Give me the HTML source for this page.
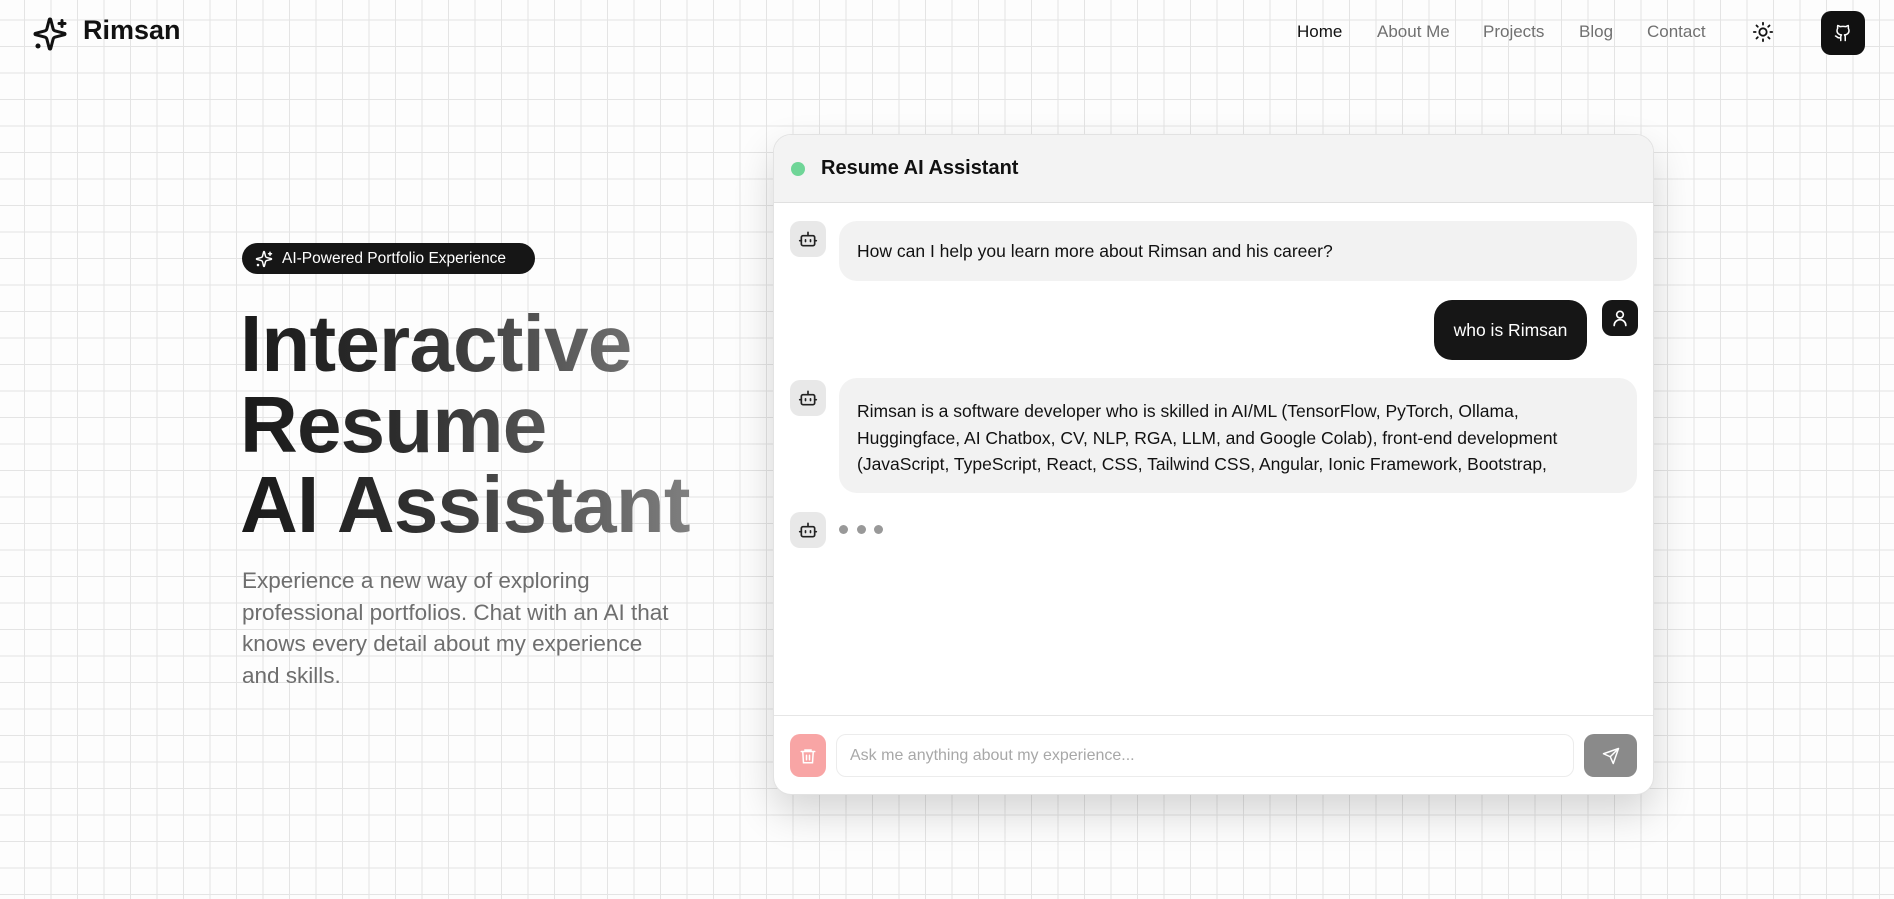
<!DOCTYPE html>
<html><head><meta charset="utf-8"><style>
*{box-sizing:border-box;margin:0;padding:0}
html,body{width:1894px;height:899px;overflow:hidden}
body{font-family:"Liberation Sans",sans-serif;background-color:#fdfdfd;
background-image:linear-gradient(to right,#e4e4e4 1px,transparent 1px),linear-gradient(to bottom,#e4e4e4 1px,transparent 1px);
background-size:26.5px 26.5px;background-position:24px 19.5px;position:relative;color:#111}
.abs{position:absolute}
.nav a{position:absolute;top:22px;font-size:17px;color:#707070;text-decoration:none}
h1{position:absolute;left:240px;top:304px;font-size:80px;line-height:80.5px;font-weight:bold;letter-spacing:-0.8px;
background:linear-gradient(90deg,#1a1a1a 0%,#2e2e2e 35%,#888 100%);-webkit-background-clip:text;background-clip:text;color:transparent;width:480px}
.card{position:absolute;left:773px;top:134px;width:881px;height:661px;background:#fff;border-radius:18px;border:1px solid #e2e2e2;box-shadow:0 18px 40px rgba(0,0,0,.16);overflow:hidden}
.hdr{height:68px;background:#f3f3f3;border-bottom:1px solid #e0e0e0;position:relative}
.av{position:absolute;width:36px;height:36px;border-radius:10px;background:#e8e8e8;display:flex;align-items:center;justify-content:center}
.bub{position:absolute;background:#f2f2f2;border-radius:18px;font-size:17.5px;color:#111}
</style></head><body>
<svg class="abs" style="left:32px;top:16px" width="36" height="36" viewBox="0 0 24 24" fill="none" stroke="#111" stroke-width="2" stroke-linecap="round" stroke-linejoin="round"><path d="M9.937 15.5A2 2 0 0 0 8.5 14.063l-6.135-1.582a.5.5 0 0 1 0-.962L8.5 9.936A2 2 0 0 0 9.937 8.5l1.582-6.135a.5.5 0 0 1 .963 0L14.063 8.5A2 2 0 0 0 15.5 9.937l6.135 1.581a.5.5 0 0 1 0 .964L15.5 14.063a2 2 0 0 0-1.437 1.437l-1.582 6.135a.5.5 0 0 1-.963 0z"/><path d="M20 3v4M22 5h-4"/><circle cx="4" cy="20" r="0.7" fill="#111"/></svg>
<div class="abs" style="left:83px;top:15px;font-size:27px;font-weight:bold;color:#111">Rimsan</div>
<div class="nav"><a style="left:1297px;color:#111">Home</a><a style="left:1377px">About Me</a><a style="left:1483px">Projects</a><a style="left:1579px">Blog</a><a style="left:1647px">Contact</a></div>
<svg class="abs" style="left:1752px;top:21px" width="22" height="22" viewBox="0 0 24 24" fill="none" stroke="#111" stroke-width="2" stroke-linecap="round"><circle cx="12" cy="12" r="4"/><path d="M12 2v2M12 20v2M2 12h2M20 12h2M4.9 4.9l1.4 1.4M17.7 17.7l1.4 1.4M4.9 19.1l1.4-1.4M17.7 6.3l1.4-1.4"/></svg>
<div class="abs" style="left:1821px;top:11px;width:44px;height:44px;background:#111;border-radius:10px;display:flex;align-items:center;justify-content:center">
<svg width="18" height="18" viewBox="0 0 24 24" fill="none" stroke="#fff" stroke-width="2" stroke-linecap="round" stroke-linejoin="round"><path d="M15 22v-4a4.8 4.8 0 0 0-1-3.5c3 0 6-2 6-5.5.08-1.25-.27-2.48-1-3.5.28-1.15.28-2.35 0-3.5 0 0-1 0-3 1.5-2.64-.5-5.36-.5-8 0C6 2 5 2 5 2c-.3 1.15-.3 2.35 0 3.5A5.4 5.4 0 0 0 4 9c0 3.5 3 5.5 6 5.5-.39.49-.68 1.05-.85 1.65S8.93 17.38 9 18v4"/><path d="M9 18c-4.51 2-5-2-7-2"/></svg></div>

<div class="abs" style="left:242px;top:243px;width:293px;height:31px;background:#161616;border-radius:16px;color:#fff;font-size:15.5px;line-height:31px;padding-left:40px">AI-Powered Portfolio Experience</div>
<svg class="abs" style="left:255px;top:250px" width="18" height="18" viewBox="0 0 24 24" fill="none" stroke="#fff" stroke-width="2" stroke-linecap="round" stroke-linejoin="round"><path d="M9.937 15.5A2 2 0 0 0 8.5 14.063l-6.135-1.582a.5.5 0 0 1 0-.962L8.5 9.936A2 2 0 0 0 9.937 8.5l1.582-6.135a.5.5 0 0 1 .963 0L14.063 8.5A2 2 0 0 0 15.5 9.937l6.135 1.581a.5.5 0 0 1 0 .964L15.5 14.063a2 2 0 0 0-1.437 1.437l-1.582 6.135a.5.5 0 0 1-.963 0z"/><path d="M20 3v4M22 5h-4"/><circle cx="4" cy="20" r="0.7" fill="#fff"/></svg>
<h1>Interactive<br>Resume<br>AI Assistant</h1>
<div class="abs" style="left:242px;top:565px;width:440px;font-size:22.5px;line-height:31.5px;color:#6e6e6e">Experience a new way of exploring professional portfolios. Chat with an AI that knows every detail about my experience and skills.</div>

<div class="card">
<div class="hdr"><div class="abs" style="left:17px;top:27px;width:14px;height:14px;border-radius:50%;background:#6fd597"></div>
<div class="abs" style="left:47px;top:22px;font-size:20px;font-weight:bold">Resume AI Assistant</div></div>
</div>
<div class="av" style="left:790px;top:221px"><svg width="20" height="20" viewBox="0 0 24 24" fill="none" stroke="#222" stroke-width="2" stroke-linecap="round"><rect x="4" y="8" width="16" height="12" rx="2"/><path d="M12 8V4M2 14h2M20 14h2M9 13v2M15 13v2"/></svg></div>
<div class="bub" style="left:839px;top:221px;width:798px;height:60px;padding:20px 18px">How can I help you learn more about Rimsan and his career?</div>
<div class="abs" style="left:1434px;top:300px;width:153px;height:60px;background:#161616;border-radius:18px;color:#fff;font-size:17.5px;line-height:60px;text-align:center">who is Rimsan</div>
<div class="av" style="left:1602px;top:300px;background:#161616"><svg width="20" height="20" viewBox="0 0 24 24" fill="none" stroke="#fff" stroke-width="2" stroke-linecap="round"><circle cx="12" cy="8" r="4"/><path d="M5 21a7 7 0 0 1 14 0"/></svg></div>
<div class="av" style="left:790px;top:380px"><svg width="20" height="20" viewBox="0 0 24 24" fill="none" stroke="#222" stroke-width="2" stroke-linecap="round"><rect x="4" y="8" width="16" height="12" rx="2"/><path d="M12 8V4M2 14h2M20 14h2M9 13v2M15 13v2"/></svg></div>
<div class="bub" style="left:839px;top:378px;width:798px;height:115px;padding:20px 18px;line-height:26.5px;overflow:hidden">Rimsan is a software developer who is skilled in AI/ML (TensorFlow, PyTorch, Ollama, Huggingface, AI Chatbox, CV, NLP, RGA, LLM, and Google Colab), front-end development (JavaScript, TypeScript, React, CSS, Tailwind CSS, Angular, Ionic Framework, Bootstrap,</div>
<div class="av" style="left:790px;top:512px"><svg width="20" height="20" viewBox="0 0 24 24" fill="none" stroke="#222" stroke-width="2" stroke-linecap="round"><rect x="4" y="8" width="16" height="12" rx="2"/><path d="M12 8V4M2 14h2M20 14h2M9 13v2M15 13v2"/></svg></div>
<div class="abs" style="left:839px;top:525px;width:9px;height:9px;border-radius:50%;background:#999"></div>
<div class="abs" style="left:857px;top:525px;width:9px;height:9px;border-radius:50%;background:#999"></div>
<div class="abs" style="left:874px;top:525px;width:9px;height:9px;border-radius:50%;background:#999"></div>
<div class="abs" style="left:774px;top:715px;width:879px;height:1px;background:#e6e6e6"></div>
<div class="abs" style="left:790px;top:734px;width:36px;height:43px;border-radius:10px;background:#f8a5a5;display:flex;align-items:center;justify-content:center"><svg width="18" height="18" viewBox="0 0 24 24" fill="none" stroke="#fff" stroke-width="2" stroke-linecap="round"><path d="M3 6h18M8 6V4h8v2M5 6l1 15h12l1-15M10 11v6M14 11v6"/></svg></div>
<div class="abs" style="left:836px;top:734px;width:738px;height:43px;border:1px solid #ececec;border-radius:10px;background:#fff;font-size:16px;color:#a8a8a8;line-height:41px;padding-left:13px">Ask me anything about my experience...</div>
<div class="abs" style="left:1584px;top:734px;width:53px;height:43px;border-radius:10px;background:#8a8a8a;display:flex;align-items:center;justify-content:center"><svg width="18" height="18" viewBox="0 0 24 24" fill="none" stroke="#fff" stroke-width="2" stroke-linejoin="round"><path d="M22 2 11 13M22 2l-7 20-4-9-9-4z"/></svg></div>
</body></html>
